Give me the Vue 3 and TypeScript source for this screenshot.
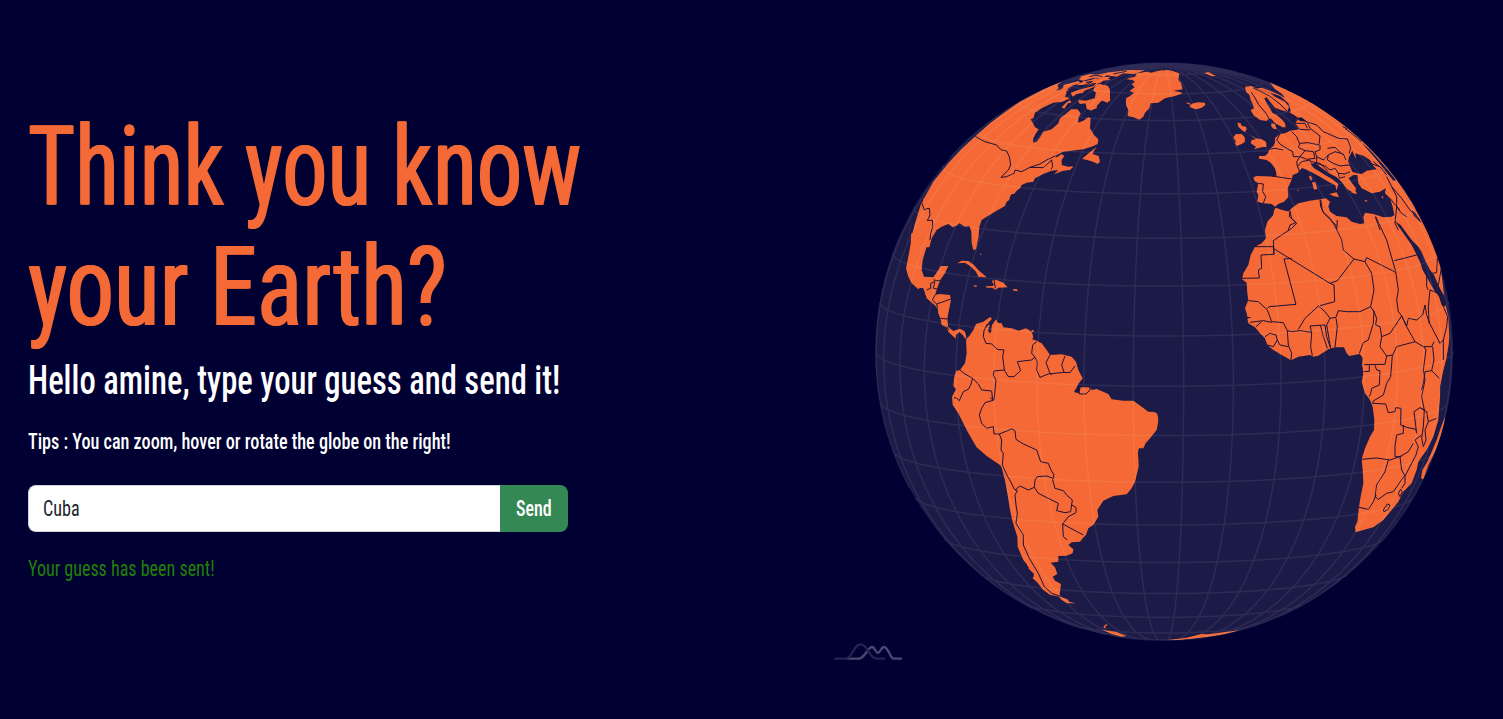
<script setup lang="ts">
interface Patch {
  x: number
  y: number
  land: string[]
  sea?: string[]
  borders?: string
}

// Scales a line of text horizontally to the given width in pixels.
const vFit = {
  mounted(el: HTMLElement, binding: { value: number }) {
    el.style.transform = `scaleX(${binding.value / el.offsetWidth})`
  },
}

const globe = { x: 1164.2, y: 351.6, r: 288.9, lon: -33.85, lat: 6.9 }
const rad = Math.PI / 180

function project(lon: number, lat: number): [number, number] | null {
  const l = (lon - globe.lon) * rad
  const p = lat * rad
  const c = globe.lat * rad
  if (Math.sin(c) * Math.sin(p) + Math.cos(c) * Math.cos(p) * Math.cos(l) < 0) return null
  return [
    globe.x + globe.r * Math.cos(p) * Math.sin(l),
    globe.y - globe.r * (Math.cos(c) * Math.sin(p) - Math.sin(c) * Math.cos(p) * Math.cos(l)),
  ]
}

function trace(points: ([number, number] | null)[]): string {
  let d = ''
  let pen = false
  for (const pt of points) {
    if (pt) d += `${pen ? 'L' : 'M'}${pt[0].toFixed(1)} ${pt[1].toFixed(1)}`
    pen = pt !== null
  }
  return d
}

let graticule = ''
for (let lon = -180; lon < 180; lon += 10) {
  graticule += trace(Array.from({ length: 91 }, (_, i) => project(lon, -90 + i * 2)))
}
for (let lat = -80; lat <= 80; lat += 10) {
  graticule += trace(Array.from({ length: 181 }, (_, i) => project(-180 + i * 2, lat)))
}

// Each patch is drawn at a third of its unit size from its own origin.
const patches: Patch[] = [
  {
    x: 870, y: 50,
    land: [
      'M155 455L165 440 190 395 235 340 275 297 318 257 360 220 400 190 450 155 520 118 578 93 562 105 566 114 558 122 574 118 582 110 590 128 585 140 600 145 577 155 550 158 535 165 515 175 495 188 490 205 482 208 487 216 495 232 506 238 498 250 490 265 489 278 500 275 510 262 520 245 545 238 565 220 570 205 590 190 603 178 622 178 632 190 625 205 625 218 640 212 655 202 662 205 660 235 672 255 685 268 683 282 665 290 640 298 580 305 555 318 560 322 575 312 583 318 575 330 575 345 595 350 612 348 600 360 580 362 552 373 565 360 545 362 520 372 495 385 490 395 470 398 455 405 450 415 440 422 432 432 425 432 420 440 418 450 410 455 405 468 380 482 350 500 335 510 328 530 326 560 318 598 310 600 305 580 304 545 298 528 285 530 268 520 258 528 248 532 235 522 215 530 200 540 185 565 178 592 122 592 125 560 135 520Z',
      'M636 326L665 302 680 290 672 302 668 312 686 318 690 335 682 342 676 338 665 334Z',
      'M580 105L600 100 625 93 632 100 612 105 600 112 590 120 598 123 580 124Z',
      'M602 128L625 120 650 113 670 108 680 98 690 96 670 112 650 120 640 128 620 132 608 140Z',
      'M575 172L588 158 600 150 604 158 594 160 583 176Z',
      'M640 80L665 76 690 73 720 66 720 72 690 80 660 86 640 92 625 88Z',
      'M650 92L680 86 705 80 720 82 720 90 700 92 690 100 670 98Z',
      'M625 156L642 152 655 155 675 150 678 128 690 110 704 104 714 108 720 120 720 150 695 152 680 168 664 182 650 175 648 160 630 162Z',
    ],
    borders: 'M315 258L325 265 345 275 380 285 385 292 395 300 410 303 418 320 422 345 415 360 400 375 393 382 410 380 432 370 435 360 455 365 480 352 520 353 545 330 548 350 543 358M480 352L510 342 530 330 555 318M158 450L155 458 163 480 170 476 178 475 180 495 172 512 187 510 188 530 182 550 180 570M640 126l12 -6 20 -4M632 108l20 -5 14 -8M600 312l12 2M600 345l12 4',
  },
  {
    x: 1080, y: 50,
    land: [
      'M150 83L140 88 158 90 165 95 155 103 164 112 148 123 162 128 150 138 138 145 138 165 145 180 143 198 160 202 178 209 190 200 195 188 208 175 212 160 235 158 255 145 285 138 308 130 300 126 280 122 308 118 303 98 295 90 298 70 285 65 265 60 235 62 215 68 200 65 170 70 165 80Z',
      'M316 158L328 158 332 164 340 160 355 157 375 158 376 165 365 173 350 178 338 175 328 170 332 165Z',
      'M372 70L385 66 396 72 408 78 395 79 382 73Z',
      'M0 80L30 72 60 76 95 66 150 60 195 61 162 72 130 70 110 80 80 76 65 85 35 82 10 90Z',
      'M-10 105L14 92 30 96 45 85 60 90 42 98 20 106Z',
      'M62 102L75 108 85 120 74 130 92 150 82 158 62 150 52 160 50 175 35 180 22 178 15 155 -4 158 -4 150 18 152 45 144 48 128 38 120 50 103Z',
    ],
    borders: 'M28 80l20 -4 20 4M100 72l24 -5 16 -3M18 98l20 -4M434 185l3 1M85 86l20 -3 14 2',
  },
  {
    x: 1220, y: 60,
    land: [
      'M75 80L95 78 110 88 150 98 165 110 195 125 207 140 202 155 185 151 165 143 150 125 140 112 133 115 140 130 150 145 157 158 170 165 185 178 195 190 197 202 188 202 175 195 165 190 155 178 147 174 140 183 120 180 100 165 92 150 102 145 98 132 92 120 88 104 78 96Z',
      'M105 86L125 83 150 92 180 106 196 115 186 102 165 87 148 66 300 60 640 290 660 530 138 530 138 510 145 485 160 470 162 452 168 443 185 450 205 455 215 445 235 430 270 422 300 418 318 415 330 425 325 440 330 455 350 468 380 472 395 485 420 492 433 490 430 470 435 458 460 462 490 472 515 470 523 465 518 440 510 415 495 400 497 385 480 395 455 400 440 392 425 385 415 370 412 345 400 345 386 355 395 368 408 385 404 402 392 394 380 386 365 365 350 352 325 338 300 320 287 308 272 312 282 325 300 335 320 348 335 356 355 372 350 392 346 376 325 365 300 350 285 342 262 330 246 324 232 340 218 345 215 360 203 385 205 412 192 425 175 432 165 440 155 432 130 430 112 425 115 405 110 395 115 370 103 362 100 352 110 348 165 350 170 345 165 325 152 308 140 300 117 296 117 288 135 288 145 278 148 268 160 258 165 248 165 235 178 222 195 220 210 212 240 208 225 190 233 180 225 167 210 160 212 150 205 130 180 108 150 98Z',
      'M52 188L62 190 65 198 78 200 80 208 75 215 90 225 108 235 125 238 138 245 140 260 125 262 102 268 108 260 92 250 95 240 108 238 85 222 68 212 55 200Z',
      'M48 222L65 222 74 232 75 245 65 252 50 258 45 250 48 245 40 232Z',
      'M155 190L165 192 170 208 160 206 153 198Z',
      'M328 402L350 397 357 412 340 408Z',
      'M276 367L286 367 292 387 282 389Z',
      'M266 347L275 350 276 362 270 358Z',
      'M432 419L443 422 438 426Z', 'M484 411L490 408 489 416Z', 'M230 389L237 390 234 393Z', 'M392 397L408 394 411 402Z',
    ],
    sea: [
      'M387 292L397 272 402 284 408 296 406 280 430 287 450 300 460 318 470 328 440 332 425 342 410 340 397 335 390 318 384 304Z',
      'M425 248L448 268 474 296 504 330 528 360 520 362 498 336 472 302 446 272Z',
      'M228 175L245 172 262 185 240 183Z',
    ],
    borders: 'M93 96L104 112 116 134 138 160 146 174M100 84L122 94 152 110 180 132 202 154M210 160L235 175 265 187 290 195 310 215 322 220 355 235 382 237 392 262 388 280M262 187L270 205 300 228 297 255 265 248 238 250 230 230 215 215M225 190L255 190 262 205M240 208L270 210M182 218L170 240 180 252 195 262 218 275 220 290 240 290 230 305 232 318 240 338M148 268L165 265 190 270M240 250L235 262 255 272 240 290 260 298 285 295 280 275 255 272M300 255L300 270 285 275 290 290 310 300 325 285 345 275 370 282 378 300M325 285L322 300 340 310 360 318 385 315 390 318M322 265L345 262 370 285M290 290L290 310 315 318 330 330 345 325 355 340 375 342 390 335M275 305L300 310 325 335M355 340L358 355 375 350M232 320L245 305 270 300 275 310M115 370L130 372 128 395 137 410 130 430M155 348L215 357M300 418L302 440 312 460 330 478 348 495 350 510M210 452L208 470 228 488 210 495 205 510M466 470L480 510M375 205L395 220 425 245M450 310L480 320 500 345M460 305L485 325M500 350L515 380 545 415 570 450 600 480M515 380L530 410 530 440 545 460 560 470M530 440L525 490 535 510M510 415L522 430 540 450M368 200l14 6',
  },
  {
    x: 1230, y: 190,
    land: [
      'M135 55L130 75 112 95 105 120 108 145 95 160 75 170 62 195 55 225 40 250 36 268 50 278 52 310 55 330 45 355 50 370 52 380 65 382 52 386 55 400 75 412 90 430 105 445 112 465 130 480 155 495 183 511 205 500 240 495 250 500 265 497 295 478 315 472 342 472 350 490 358 498 388 492 400 500 398 530 402 590 630 590 640 540 650 500 658 440 655 380 648 350 640 300 637 270 630 220 610 160 575 95 540 30 490 60 520 75 490 100 350 110Z',
    ],
    sea: [
      'M495 94L512 105 530 130 545 150 565 170 575 185 585 210 600 240 612 255 625 285 635 305 645 320 651 335 645 350 635 345 628 320 612 300 595 270 578 240 570 215 560 195 545 165 520 130Z',
      'M545 60L555 68 575 98 568 94 552 78Z',
    ],
    borders: 'M75 170L130 170 132 193 93 195 95 235 85 240 88 264 36 265M132 193L130 152 155 135 185 115 200 100 185 85 180 65M272 30L278 65 300 85 310 100 320 118 322 90M320 118L335 150 340 180 372 207 322 272 300 280 130 175M372 207L405 215 410 203 497 247M437 80L470 150 497 245 505 300 500 330 505 365 515 378M493 212L560 195M405 215L425 250 432 300 422 350M300 280L312 285 314 335 270 347M162 207L185 205M162 207L198 343 118 350 112 355M55 332L85 335 112 360 125 395 160 398 172 422 185 425 210 422 245 427 240 408 285 405M205 418L225 385 265 348 285 365 300 385 318 382 325 362 350 365 390 365 422 350 432 365 430 400 415 450 400 458 388 490M318 385L322 410 315 472M300 385L290 405 302 475M272 408L280 440 292 475M285 405L290 440 302 475M245 427L242 470 247 497M172 422L175 465 185 490 183 510M105 440L120 430 138 435 142 450 130 470 112 465M142 450L150 465 175 470M60 397L100 392 125 397M78 410L95 395M430 360L440 385 437 405 450 410 455 440 480 430 515 378 530 410 555 455 500 470 488 495 470 498 450 470 455 440M515 378L530 408 535 385 560 390 578 375 585 345 590 375 600 402 630 460M600 300L595 350 597 400M600 300L625 310 640 350 653 380 650 410 640 450 630 460M640 450L640 510M555 455L580 470 605 470 612 455M470 498L465 523M590 260L590 290 595 300M622 205L620 248 605 250M635 230L625 285',
  },
  {
    x: 1340, y: 340,
    land: [
      'M45 42L58 38 68 55 66 75 72 92 65 125 75 160 90 180 98 200 103 240 102 270 90 290 75 325 65 358 68 390 70 430 62 470 57 500 52 545 45 560 47 577 70 570 100 562 130 540 155 510 175 485 190 455 215 430 230 390 235 365 260 330 280 290 295 240 300 170 300 130 315 70 325 20 328 -5Z',
      'M315 230L312 260 300 300 285 335 265 375 250 418 243 415 247 390 262 365 275 335 290 300 300 270Z',
    ],
    borders: 'M135 73L72 74M70 95L88 94 88 76M105 76L110 90 120 92 118 135 95 145 92 160 88 170M157 45L152 110 140 130 130 165 100 183 98 190 137 192 145 218 165 215 167 203 183 205 182 255 200 262 228 268 230 280 222 215 240 203 253 210 245 170 255 120 250 90 258 30 252 20M278 20L282 60 275 92 255 95 250 130 245 150M275 92L298 115M240 203L260 215 265 245 290 235M253 210L250 260 245 295 250 320 258 300 255 270 265 245M245 285L225 300 235 320 228 345 195 408 185 390 180 350 165 350 165 320 170 285 190 280 190 255M65 358L110 354 150 360 185 348M220 310L205 335 180 350M145 360L135 395 110 435 105 470 115 478 140 460 160 455 195 405 195 430 185 445M57 502L85 508 100 485 108 465M130 510L142 492 150 495 145 508 132 515ZM175 460L182 448 187 455 180 470Z',
  },
  {
    x: 870, y: 220,
    land: [
      'M122 72L124 40 188 40 185 55 170 80 158 120 155 150 162 170 190 172 205 150 212 138 235 138 225 160 212 178 205 195 200 210 195 225 210 222 240 225 243 240 238 265 232 295 234 320 250 333 270 326 283 333 292 352 288 360 278 345 268 336 258 345 257 356 245 345 235 335 230 322 215 315 212 298 205 280 203 265 190 252 170 235 160 205 150 203 145 208 125 190 115 170 108 145 115 110Z',
      'M262 130L275 122 295 123 312 135 325 150 350 172 325 170 318 155 300 138 285 128Z',
      'M348 199L368 198 372 194 365 182 380 180 400 188 413 202 385 203 377 209 366 203 350 203Z',
      'M308 195L322 197 318 202Z', 'M429 207L445 208 443 213 430 212Z', 'M485 329L492 331 490 336 485 335Z', 'M331 100L335 103 331 106Z',
      'M127 2L119 30 112 62 108 80 114 52 121 25Z',
    ],
    borders: 'M190 180L205 182 210 182M170 210L182 205 182 190 195 185 190 205 205 208M195 225L187 240 200 252 243 237M200 252L203 262M212 295L232 297M230 320L237 330M290 340L288 360M373 182L376 205M150 455L155 460M478 213l5 7M489 230l4 4M497 248l-2 6M500 266l-2 6M490 286l3 4M278 178l5 2M386 151l3 1M345 84l4 -4M400 296l4 0',
  },
  {
    x: 940, y: 310,
    land: [
      'M60 180L75 160 80 130 78 88 88 78 100 60 108 42 130 35 150 21 156 26 142 42 138 55 147 42 152 58 152 70 156 45 168 28 173 38 185 40 190 52 215 55 235 62 258 55 275 65 280 80 277 88 290 92 305 100 320 120 330 135 365 133 395 140 408 155 415 180 428 205 415 222 403 247 418 250 422 232 450 232 455 240 470 237 505 252 515 268 550 272 580 272 605 290 625 305 641 306 650 309 654 320 655 333 650 360 630 385 617 400 610 415 597 415 593 430 595 450 594 470 586 508 200 512 190 480 180 465 140 438 110 412 100 395 80 360 55 310 38 285 36 260 48 238 40 228 42 205 48 183Z',
    ],
    sea: ['M146 52L150 50 154 62 151 70 145 65Z'],
    borders: 'M60 180L75 192 98 205 92 225 85 238 70 245 58 272 50 265 42 262M98 205L115 222 125 240 155 243 158 270 150 262M132 62L130 80 138 100 155 102 172 118 192 120 188 140 193 180 162 183 160 195 168 210 162 270 135 278 125 295 118 315 125 340 140 355 160 350 162 372 178 372 215 357 225 362 228 388 250 402 290 420 302 455 325 460 333 480 342 495 338 510M193 180L205 200 222 200 242 182 232 155 275 150 285 142 275 130 278 105 290 95M132 62L142 42M285 142L292 155 290 180 300 202 325 192 372 187M330 135L318 158 330 190 335 195M375 138L365 165 372 187 390 188 405 168M178 372L185 390 183 420 190 430 187 465 202 498M403 245L418 228 450 230 450 240 438 252 418 252 415 238',
  },
  {
    x: 980, y: 450,
    land: [
      'M60 -10L473 -10 476 50 465 95 455 115 440 133 400 138 370 152 352 180 355 200 340 225 325 235 318 255 308 265 300 275 275 277 265 285 280 298 278 310 260 317 235 318 235 335 212 338 225 352 232 372 218 380 225 392 243 402 238 440 210 434 190 420 170 395 158 385 162 372 145 355 140 342 130 330 113 290 112 260 98 215 90 180 82 130 75 90 65 52Z',
      'M235 438L262 448 268 455 287 460 262 460 245 450Z',
      'M398 518L382 523 375 533 383 536 370 534 375 524Z',
      'M366 539L410 546 440 558 425 560 395 552Z',
      'M560 570L610 568 630 562 590 571Z',
    ],
    borders: 'M82 78L92 95 103 118 112 122 105 135 108 165 112 190 108 220 130 255 130 285 148 325 175 370 193 410 215 430 238 438M105 120L120 108 145 120 163 112 165 90 172 80 200 78 217 84M163 112L175 130 235 160 230 182 255 188 272 185 277 150 260 135 250 122 225 115 218 90M275 165L288 172 288 188 265 200 248 222 250 260 262 270M248 222L310 255M318 440l10 2M528 466l7 3M138 345l8 8M155 372l6 8M228 355l5 3',
  },
  {
    x: 1080, y: 600,
    land: ['M262 121L320 113 365 102 385 103 430 97 480 91 440 102 380 111 310 119Z', 'M205 120L220 120 215 122Z'],
  },
]
</script>

<template>
  <main class="page">
    <section class="intro">
      <h1>
        <span v-fit="553">Think you know</span>
        <span v-fit="419">your Earth?</span>
      </h1>
      <h2><span v-fit="532">Hello amine, type your guess and send it!</span></h2>
      <p class="tips"><span v-fit="423">Tips : You can zoom, hover or rotate the globe on the right!</span></p>
      <div class="group">
        <div class="field" role="textbox"><span v-fit="37">Cuba</span></div>
        <button class="send" type="button"><span v-fit="36">Send</span></button>
      </div>
      <p class="status"><span v-fit="187">Your guess has been sent!</span></p>
    </section>
    <svg class="map" viewBox="751 0 752 719" width="752" height="719">
      <defs>
        <clipPath id="disc"><circle :cx="globe.x" :cy="globe.y" :r="globe.r" /></clipPath>
      </defs>
      <circle class="ocean" :cx="globe.x" :cy="globe.y" :r="globe.r" />
      <g clip-path="url(#disc)">
        <g v-for="(p, i) in patches" :key="i" :transform="`translate(${p.x} ${p.y}) scale(.33333)`">
          <path v-for="(d, j) in p.land" :key="j" class="land" :d="d" />
        </g>
        <g v-for="(p, i) in patches" :key="`b${i}`" :transform="`translate(${p.x} ${p.y}) scale(.33333)`">
          <path v-for="(d, j) in p.sea" :key="j" class="ocean" :d="d" />
          <path v-if="p.borders" class="border" :d="p.borders" />
        </g>
      </g>
      <path class="grid" :d="graticule" />
      <g class="mark" transform="translate(825 630) scale(.33333)">
        <path class="mark-front" d="M65 86H101C120 86 128 51 141 51C150 51 152 69 159 69C166 69 168 51 177 51C190 51 196 86 206 86H231" />
        <path class="mark-back" d="M28 86H62C83 86 84 43 107 43C130 43 130 86 156 86H180" />
      </g>
    </svg>
  </main>
</template>

<style>
body {
  margin: 0;
  background: #000033;
}
</style>

<style scoped>
.page {
  display: flex;
  width: 1503px;
  height: 719px;
  overflow: hidden;
  background: #000033;
  font-family: Roboto, "Liberation Sans", sans-serif;
  font-stretch: 75%;
}
.intro {
  box-sizing: border-box;
  width: 751px;
  padding: 107px 0 0 28px;
}
span {
  display: inline-block;
  transform-origin: 0 50%;
  white-space: nowrap;
}
h1 {
  display: flex;
  flex-direction: column;
  align-items: flex-start;
  margin: 0;
  color: #f46935;
  font-size: 112px;
  font-weight: 400;
  line-height: 120px;
  text-shadow: 1.2px 0 #f46935, -1.2px 0 #f46935;
}
h2 {
  margin: 12px 0 0;
  color: #fff;
  font-size: 40.5px;
  font-weight: 500;
  line-height: 43px;
}
.tips {
  margin: 27px 0 0;
  color: #fff;
  font-size: 22.5px;
  font-weight: 500;
  line-height: 24px;
}
.group {
  display: flex;
  width: 540px;
  height: 47px;
  margin-top: 32px;
}
.field {
  box-sizing: border-box;
  width: 472px;
  padding-left: 14px;
  border: 1px solid #ced4da;
  border-right: 0;
  border-radius: 8px 0 0 8px;
  background: #fff;
  color: #212529;
  font-size: 22.5px;
  line-height: 45px;
}
.send {
  display: flex;
  width: 68px;
  height: 47px;
  padding: 0 0 0 16px;
  border: 0;
  border-radius: 0 8px 8px 0;
  background: #348854;
  color: #fff;
  font: inherit;
  font-size: 22.5px;
  font-weight: 500;
  line-height: 47px;
}
.status {
  margin: 22px 0 0;
  color: #208006;
  font-size: 22px;
  line-height: 30px;
}
.map {
  flex: none;
}
.ocean {
  fill: #1c1a47;
}
.land {
  fill: #f46935;
}
.border {
  fill: none;
  stroke: #1c1038;
  stroke-width: 3;
}
.grid {
  fill: none;
  stroke: #fff;
  stroke-opacity: 0.08;
  stroke-width: 1.5;
}
.mark path {
  fill: none;
  stroke-width: 7;
}
.mark-front {
  stroke: #4a4870;
}
.mark .mark-back {
  stroke: #24234d;
}
</style>
